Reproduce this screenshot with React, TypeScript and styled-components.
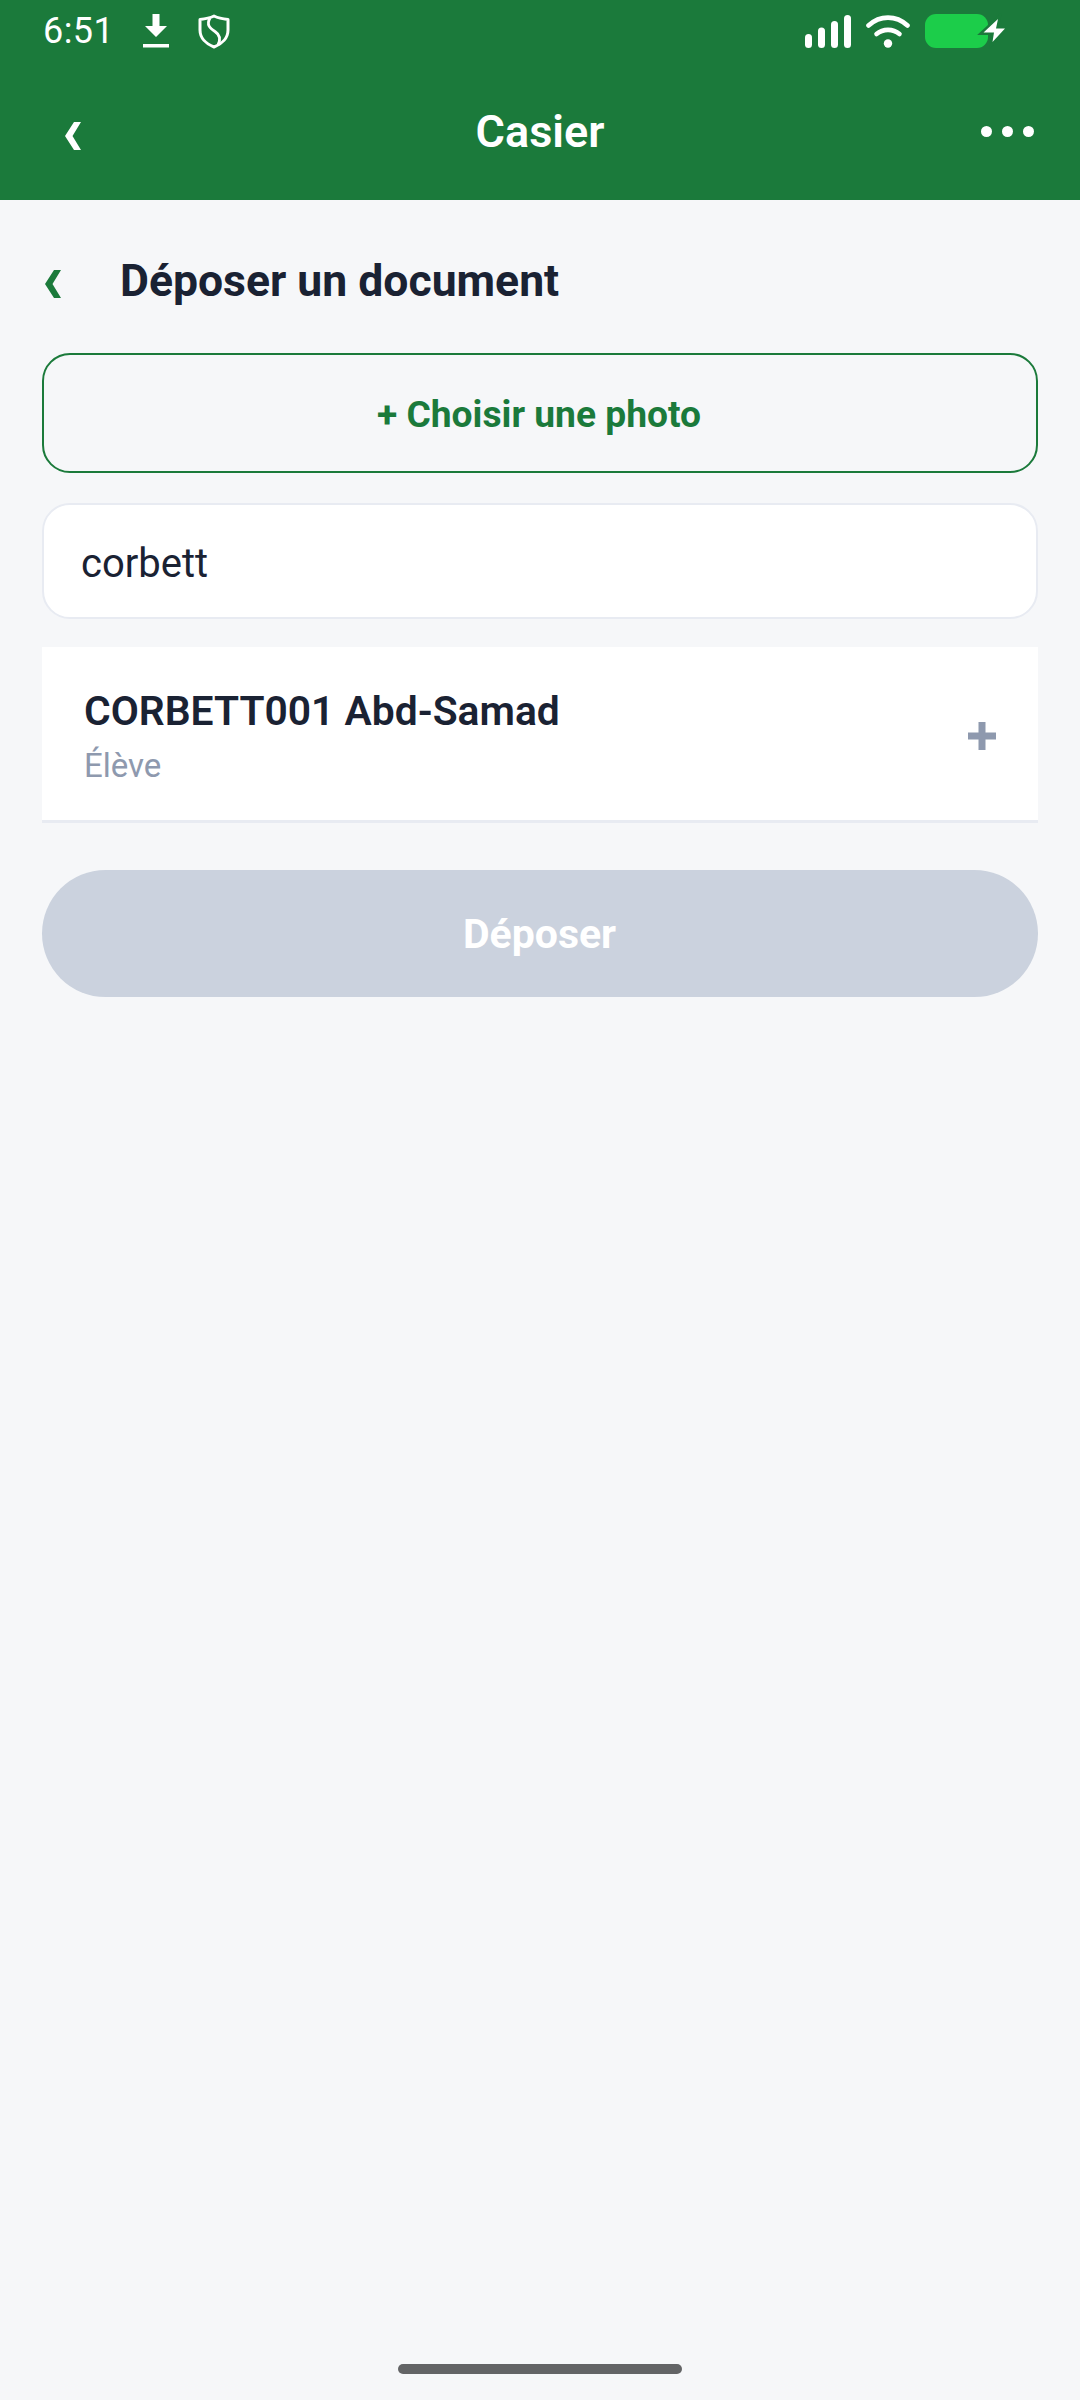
import React from "react";
import styled, { createGlobalStyle } from "styled-components";

const Global = createGlobalStyle`
  html, body { margin: 0; padding: 0; background: #f6f7f9; }
  * { box-sizing: border-box; }
  body { font-family: Roboto, "Liberation Sans", sans-serif; }
`;

const Page = styled.div`
  width: 1080px;
  height: 2400px;
  display: flex;
  flex-direction: column;
  background: #f6f7f9;
  overflow: hidden;
`;

const Header = styled.header`
  height: 200px;
  background: #1b7a3b;
  color: #fff;
  display: flex;
  flex-direction: column;
  flex: none;
`;

const StatusBar = styled.div`
  height: 62px;
  padding: 0 73px 0 43px;
  display: flex;
  align-items: center;
  justify-content: space-between;
`;

const StatusGroup = styled.div`
  display: flex;
  align-items: center;
`;

const Time = styled.span`
  font-size: 36px;
  font-weight: 400;
  line-height: 62px;
  width: 100px;
  letter-spacing: 0.4px;
`;

const StatusSvg = styled.svg<{ $gap?: number }>`
  display: block;
  flex: none;
  margin-left: ${(p) => p.$gap ?? 0}px;
`;

const Nav = styled.div`
  height: 138px;
  padding: 0 46px;
  display: grid;
  grid-template-columns: 1fr auto 1fr;
  align-items: center;
`;

const NavStart = styled.div`
  padding: 10px 0 0 19px;
`;

const NavTitle = styled.h1`
  margin: 2px 0 0;
  font-size: 45px;
  font-weight: 600;
  line-height: 52px;
`;

const NavEnd = styled.div`
  justify-self: end;
  display: flex;
  gap: 10px;
`;

const Dot = styled.span`
  width: 11px;
  height: 11px;
  border-radius: 50%;
  background: #fff;
`;

const Content = styled.main`
  padding: 0 42px;
  display: flex;
  flex-direction: column;
  flex: 1;
`;

const TitleRow = styled.div`
  height: 153px;
  display: flex;
  align-items: center;
  gap: 59px;
  padding: 8px 0 0 3px;
`;

const TitleBack = styled.div`
  padding-top: 6px;
`;

const PageTitle = styled.h2`
  margin: 0;
  font-size: 44.5px;
  font-weight: 700;
  line-height: 52px;
  color: #1a2233;
`;

const PickButton = styled.button`
  height: 120px;
  width: 100%;
  border: 2px solid #1b7a3b;
  border-radius: 28px;
  background: transparent;
  color: #1b7a3b;
  font: 700 37.2px/44px Roboto, sans-serif;
  padding: 2px 2px 0 0;
`;

const SearchField = styled.input`
  margin-top: 30px;
  height: 116px;
  width: 100%;
  border: 2px solid #e8ebf2;
  border-radius: 28px;
  background: #fff;
  color: #1a2233;
  font: 400 40px/48px Roboto, sans-serif;
  padding: 5px 36px 0 37px;
  outline: none;
`;

const ResultRow = styled.div`
  margin-top: 28px;
  height: 176px;
  background: #fff;
  border-bottom: 3px solid #e8ebf2;
  display: flex;
  align-items: center;
  justify-content: space-between;
  padding: 0 42px;
`;

const ResultText = styled.div`
  display: flex;
  flex-direction: column;
  gap: 12px;
  padding-top: 4px;
`;

const ResultName = styled.div`
  font-size: 40.8px;
  font-weight: 600;
  line-height: 48px;
  color: #1a2233;
`;

const ResultRole = styled.div`
  font-size: 33px;
  line-height: 38px;
  color: #8e99ae;
`;

const PlusIcon = styled(StatusSvg)`
  margin-top: 4px;
`;

const SubmitButton = styled.button`
  margin-top: 47px;
  height: 127px;
  width: 100%;
  border: 0;
  border-radius: 64px;
  background: #cbd2de;
  color: #fff;
  font: 700 41px/46px Roboto, sans-serif;
  padding: 0 1px 0 0;
`;

const HomeBar = styled.div`
  flex: none;
  width: 284px;
  height: 10px;
  border-radius: 5px;
  background: #636466;
  margin: 0 auto 26px;
`;

const Chevron = ({ color }: { color: string }) => (
  <StatusSvg width="16" height="28" viewBox="0 0 16 28">
    <path d="M9 0h7L7.5 14 16 28H9L0 14z" fill={color} />
  </StatusSvg>
);

export default function App() {
  return (
    <Page>
      <Global />
      <Header>
        <StatusBar>
          <StatusGroup>
            <Time>6:51</Time>
            <StatusSvg width="26" height="34" viewBox="0 0 26 34">
              <path d="M9.5 0h7v12H24L13 23 2 12h7.5zM0 30h26v3.5H0z" fill="#fff" />
            </StatusSvg>
            <StatusSvg $gap={29} width="32" height="36" viewBox="0 0 32 36">
              <path d="M16 3 C20 5 25 6 30 6.5 V17 C30 25 24 31 16 34 C8 31 2 25 2 17 V6.5 C7 6 12 5 16 3 Z" fill="none" stroke="#fff" strokeWidth="3" strokeLinejoin="round" />
              <path d="M12 5 C8 12 12 15 17 18.5 C21.5 21.5 23 26 20 32" fill="none" stroke="#fff" strokeWidth="2.8" />
            </StatusSvg>
          </StatusGroup>
          <StatusGroup>
            <StatusSvg width="46" height="33" viewBox="0 0 46 33">
              <rect x="0" y="19" width="7" height="14" rx="3.5" fill="#fff" />
              <rect x="13" y="12.5" width="7" height="20.5" rx="3.5" fill="#fff" />
              <rect x="26" y="6" width="7" height="27" rx="3.5" fill="#fff" />
              <rect x="39" y="0" width="7" height="33" rx="3.5" fill="#fff" />
            </StatusSvg>
            <StatusSvg $gap={15} width="44" height="33" viewBox="0 0 44 33">
              <path d="M2.5 10.5 C14 0 30 0 41.5 10.5" fill="none" stroke="#fff" strokeWidth="4.6" strokeLinecap="round" />
              <path d="M10.5 19 C17 13.5 27 13.5 33.5 19" fill="none" stroke="#fff" strokeWidth="4.6" strokeLinecap="round" />
              <circle cx="22" cy="28.5" r="4.2" fill="#fff" />
            </StatusSvg>
            <StatusSvg $gap={15} width="82" height="36" viewBox="0 0 82 36">
              <rect x="0" y="1" width="63" height="34" rx="11" fill="#1ccd4a" />
              <path d="M73 6 L58.5 19.5 H69 L67.5 29 L80 15.5 H71 Z" fill="#1b7a3b" stroke="#1b7a3b" strokeWidth="5" />
              <path d="M73 6 L58.5 19.5 H69 L67.5 29 L80 15.5 H71 Z" fill="#fff" />
            </StatusSvg>
          </StatusGroup>
        </StatusBar>
        <Nav>
          <NavStart>
            <Chevron color="#fff" />
          </NavStart>
          <NavTitle>Casier</NavTitle>
          <NavEnd>
            <Dot />
            <Dot />
            <Dot />
          </NavEnd>
        </Nav>
      </Header>
      <Content>
        <TitleRow>
          <TitleBack>
            <Chevron color="#1b7a3b" />
          </TitleBack>
          <PageTitle>Déposer un document</PageTitle>
        </TitleRow>
        <PickButton>+ Choisir une photo</PickButton>
        <SearchField defaultValue="corbett" />
        <ResultRow>
          <ResultText>
            <ResultName>CORBETT001 Abd-Samad</ResultName>
            <ResultRole>Élève</ResultRole>
          </ResultText>
          <PlusIcon width="28" height="28" viewBox="0 0 28 28">
            <path d="M10.5 0h7v10.5H28v7H17.5V28h-7V17.5H0v-7h10.5z" fill="#8e99ae" />
          </PlusIcon>
        </ResultRow>
        <SubmitButton>Déposer</SubmitButton>
      </Content>
      <HomeBar />
    </Page>
  );
}
